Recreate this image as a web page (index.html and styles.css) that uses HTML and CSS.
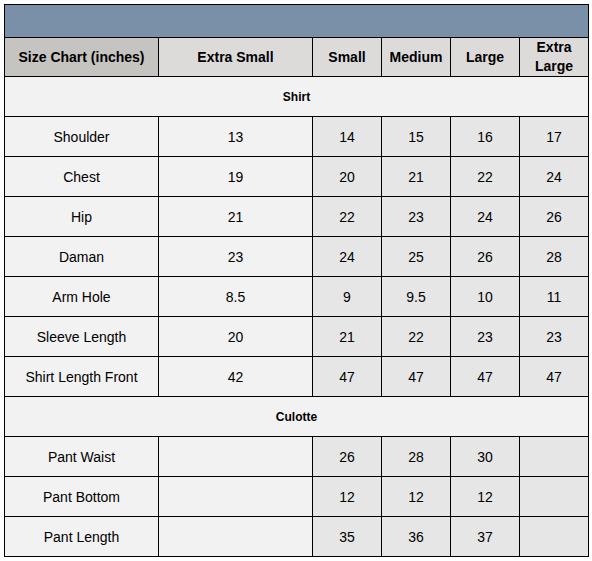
FILE: index.html
```html
<!DOCTYPE html>
<html>
<head>
<meta charset="utf-8">
<link rel="stylesheet" href="styles.css">
</head>
<body>
<div class="wrap">
<table class="chart">
  <colgroup>
    <col class="c-wide"><col class="c-wide"><col class="c-narrow"><col class="c-narrow"><col class="c-narrow"><col class="c-narrow">
  </colgroup>
  <tr class="bar"><td colspan="6"></td></tr>
  <tr class="head">
    <th class="first">Size Chart (inches)</th>
    <th>Extra Small</th>
    <th>Small</th>
    <th>Medium</th>
    <th>Large</th>
    <th>Extra<br>Large</th>
  </tr>
  <tr class="section"><td colspan="6">Shirt</td></tr>
  <tr class="row"><td>Shoulder</td><td>13</td><td>14</td><td>15</td><td>16</td><td>17</td></tr>
  <tr class="row"><td>Chest</td><td>19</td><td>20</td><td>21</td><td>22</td><td>24</td></tr>
  <tr class="row"><td>Hip</td><td>21</td><td>22</td><td>23</td><td>24</td><td>26</td></tr>
  <tr class="row"><td>Daman</td><td>23</td><td>24</td><td>25</td><td>26</td><td>28</td></tr>
  <tr class="row"><td>Arm Hole</td><td>8.5</td><td>9</td><td>9.5</td><td>10</td><td>11</td></tr>
  <tr class="row"><td>Sleeve Length</td><td>20</td><td>21</td><td>22</td><td>23</td><td>23</td></tr>
  <tr class="row"><td>Shirt Length Front</td><td>42</td><td>47</td><td>47</td><td>47</td><td>47</td></tr>
  <tr class="section"><td colspan="6">Culotte</td></tr>
  <tr class="row"><td>Pant Waist</td><td></td><td>26</td><td>28</td><td>30</td><td></td></tr>
  <tr class="row"><td>Pant Bottom</td><td></td><td>12</td><td>12</td><td>12</td><td></td></tr>
  <tr class="row"><td>Pant Length</td><td></td><td>35</td><td>36</td><td>37</td><td></td></tr>
</table>
</div>
</body>
</html>
```
FILE: styles.css
```css
html, body {
  margin: 0;
  padding: 0;
  background: #ffffff;
}
.wrap {
  padding: 4px 0 0 4px;
}
.chart {
  border-collapse: collapse;
  table-layout: fixed;
  width: 585px;
  font-family: "Liberation Sans", Arial, sans-serif;
  font-size: 14px;
  color: #000;
}
.c-wide { width: 154px; }
.c-narrow { width: 69px; }
.chart td, .chart th {
  border: 1px solid #000;
  padding: 0;
  text-align: center;
  vertical-align: middle;
}
.bar td {
  background: #7a8fa8;
  height: 32px;
}
.head th {
  background: #dddbda;
  font-weight: bold;
  font-size: 14px;
  line-height: 19px;
  height: 38px;
}
.head th.first {
  background: #c6c4c1;
}
.section td {
  background: #f2f2f2;
  font-weight: bold;
  font-size: 12px;
  height: 39px;
}
.row td {
  background: #e6e6e6;
  height: 39px;
}
.row td:nth-child(1), .row td:nth-child(2) {
  background: #f2f2f2;
}
```
